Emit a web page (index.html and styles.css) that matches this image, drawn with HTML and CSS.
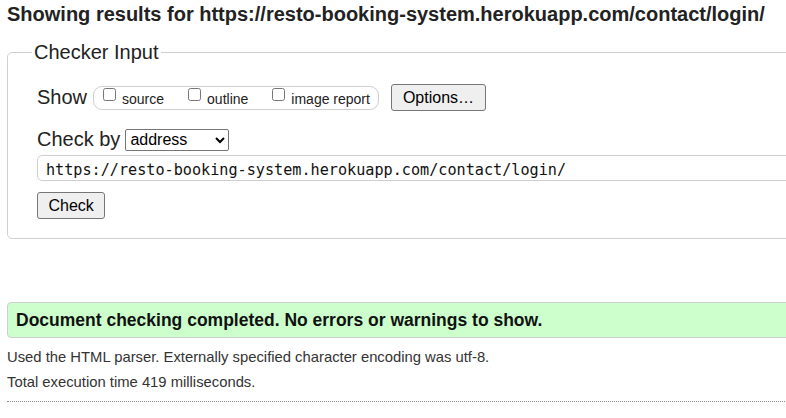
FILE: index.html
```html
<!DOCTYPE html>
<html lang="en">
<head>
<meta charset="utf-8">
<title>Showing results for https://resto-booking-system.herokuapp.com/contact/login/ - Nu Html Checker</title>
<link rel="stylesheet" href="styles.css">
</head>
<body>
<div class="page">
  <h2 class="results-title">Showing results for https://resto-booking-system.herokuapp.com/contact/login/</h2>
  <fieldset class="checker">
    <legend class="checker-legend">Checker Input</legend>
    <div class="checker-body">
      <div class="row show-row">
        <span class="row-label">Show</span>
        <div class="pill">
          <label class="opt"><input class="cb" type="checkbox"><span class="opt-text">source</span></label>
          <label class="opt"><input class="cb" type="checkbox"><span class="opt-text">outline</span></label>
          <label class="opt"><input class="cb" type="checkbox"><span class="opt-text">image report</span></label>
        </div>
        <button class="btn options-btn" type="button">Options…</button>
      </div>
      <div class="row checkby-row">
        <span class="row-label">Check by</span>
        <select class="select"><option>address</option><option>file upload</option><option>text input</option></select>
      </div>
      <input class="url" type="text" value="https://resto-booking-system.herokuapp.com/contact/login/">
      <button class="btn check-btn" type="button">Check</button>
    </div>
  </fieldset>
  <div class="success">Document checking completed. No errors or warnings to show.</div>
  <p class="meta meta-first">Used the HTML parser. Externally specified character encoding was utf-8.</p>
  <p class="meta meta-second">Total execution time 419 milliseconds.</p>
  <hr class="dotted">
</div>
</body>
</html>
```
FILE: styles.css
```css
html {
  overflow: hidden;
  background: #fff;
}

body {
  margin: 0;
  padding: 0 7px;
  font-family: "Liberation Sans", Arial, sans-serif;
  color: #222;
}

.page {
  width: 880px;
}

.results-title {
  margin: 3px 0 0;
  font-size: 20px;
  line-height: 23px;
  font-weight: bold;
  color: #222;
  white-space: nowrap;
}

.checker {
  margin: 15px 0 0;
  padding: 20px 0 19px 24px;
  border: 1px solid #cfcfcf;
  border-radius: 5px;
  min-width: 0;
}

.checker-legend {
  padding: 0 2px;
  font-size: 20px;
  line-height: 23px;
  color: #222;
}

.checker-body {
  padding-left: 5px;
  display: flex;
  flex-direction: column;
  align-items: flex-start;
}

.row {
  display: flex;
  align-items: center;
}

.row-label {
  font-size: 20px;
  line-height: 23px;
  color: #222;
}

.show-row {
  height: 27px;
}

.show-row .row-label {
  margin-right: 6px;
}

.pill {
  display: flex;
  align-items: center;
  box-sizing: border-box;
  height: 24px;
  padding: 0 8px 0 9px;
  border: 1px solid #cfcfcf;
  border-radius: 9px;
  gap: 24px;
}

.opt {
  display: flex;
  align-items: center;
  font-size: 14px;
  color: #222;
}

.cb {
  width: 13px;
  height: 13px;
  margin: 0 6px 6px 0;
}

.opt-text {
  padding-top: 3px;
  line-height: 16px;
}

.btn {
  box-sizing: border-box;
  height: 27px;
  padding: 3px 10px;
  font-family: "Liberation Sans", Arial, sans-serif;
  font-size: 16px;
  line-height: 19px;
  color: #000;
  background: #efefef;
  border: 1px solid #767676;
  border-radius: 3px;
}

.options-btn {
  margin-left: 12px;
  padding: 3px 11px;
}

.checkby-row {
  margin-top: 17px;
  height: 23px;
}

.checkby-row .row-label {
  margin-right: 5px;
}

.select {
  box-sizing: border-box;
  width: 104px;
  height: 22px;
  font-family: "Liberation Sans", Arial, sans-serif;
  font-size: 16px;
  color: #000;
  background: #fff;
  border: 1px solid #767676;
  border-radius: 2px;
}

.url {
  align-self: stretch;
  box-sizing: border-box;
  margin-top: 4px;
  height: 26px;
  padding: 3px 8px 0;
  font-family: "DejaVu Sans Mono", "Liberation Mono", monospace;
  font-size: 15.17px;
  color: #111;
  background: #fff;
  border: 1px solid #cfcfcf;
  border-radius: 5px;
  outline: none;
}

.check-btn {
  margin-top: 11px;
  padding: 3px 10.5px;
}

.success {
  margin-top: 63px;
  padding: 7px 8px;
  font-size: 17.5px;
  line-height: 20px;
  font-weight: bold;
  color: #111;
  background: #ccffcc;
  border: 1px solid #cfcfcf;
  border-radius: 4px;
}

.meta {
  margin: 0;
  font-size: 14.8px;
  line-height: 17px;
  color: #333;
}

.meta-first {
  margin-top: 11px;
}

.meta-second {
  margin-top: 7.6px;
}

.dotted {
  margin: 10.4px 0 0;
  height: 0;
  border: 0;
  border-top: 1px dotted #888;
}
```
